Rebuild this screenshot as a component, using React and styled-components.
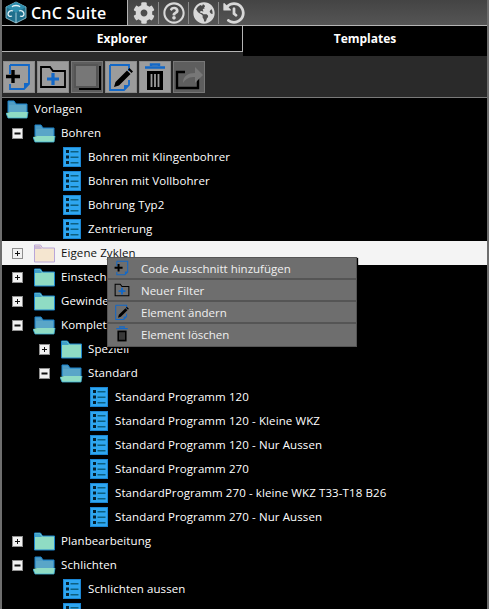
import React from 'react';
import styled, { createGlobalStyle } from 'styled-components';
import { FaCog, FaRegQuestionCircle, FaGlobeAmericas, FaHistory } from 'react-icons/fa';

const GlobalStyle = createGlobalStyle`
	html, body {
		margin: 0;
		padding: 0;
		background: #000;
		font-family: "Open Sans", "Noto Sans", "Liberation Sans", sans-serif;
	}
`;

const Frame = styled.div`
	position: relative;
	display: flex;
	flex-direction: column;
	width: 489px;
	height: 609px;
	overflow: hidden;
	box-sizing: border-box;
	border-left: 2px solid #6e6e6e;
	border-right: 2px solid #6e6e6e;
	background: #000;
	color: #fff;
`;

const TitleBar = styled.div`
	display: flex;
	flex: none;
	height: 25px;
	margin-left: -2px;
	margin-right: -2px;
	border-bottom: 1px solid #b4b4b4;
	background: linear-gradient(#444, #555);
`;

const Brand = styled.div`
	display: flex;
	align-items: center;
	gap: 3px;
	width: 128px;
	box-sizing: border-box;
	padding-left: 4px;
	border-right: 1px solid #b4b4b4;
	background: #000;
	font-size: 16px;
	font-weight: 600;
	letter-spacing: 0.2px;
`;

const TitleTools = styled.div`
	display: flex;
	align-items: center;
	padding-left: 1px;
`;

const TitleTool = styled.div`
	display: flex;
	align-items: center;
	justify-content: center;
	width: 29px;
	height: 22px;
	color: #d8d8d8;
	border-right: ${p => (p.$last ? 'none' : '1px solid #8a8a8a')};
	font-size: 22px;
`;

const Tabs = styled.div`
	display: flex;
	flex: none;
	height: 30px;
`;

const Tab = styled.div`
	display: flex;
	align-items: center;
	justify-content: center;
	box-sizing: border-box;
	width: ${p => (p.$active ? 'auto' : '241px')};
	flex: ${p => (p.$active ? '1' : 'none')};
	height: ${p => (p.$active ? '30px' : '26px')};
	padding-bottom: ${p => (p.$active ? '6px' : '0')};
	border-right: ${p => (p.$active ? 'none' : '1px solid #b4b4b4')};
	border-bottom: ${p => (p.$active ? 'none' : '1px solid #b4b4b4')};
	font-size: 12px;
	font-weight: 700;
`;

const TabGap = styled.div`
	height: 4px;
	background: #2a2a2a;
`;

const TabColumn = styled.div`
	display: flex;
	flex-direction: column;
	flex: none;
	width: 241px;
`;

const Toolbar = styled.div`
	display: flex;
	flex: none;
	align-items: center;
	gap: 2px;
	height: 40px;
	box-sizing: content-box;
	padding: 1px 0 0 1px;
	background: #2a2a2a;
	border-bottom: 1px solid #7a7a7a;
	margin-bottom: -1px;
`;

const ToolButton = styled.div`
	display: flex;
	align-items: center;
	justify-content: center;
	width: 32px;
	height: 32px;
	background: ${p => (p.$disabled ? '#5e5e5e' : '#9c9c9c')};
	border: 1px solid ${p => (p.$disabled ? '#777' : '#8a8a8a')};
	box-sizing: border-box;
`;

const Tree = styled.div`
	display: flex;
	flex-direction: column;
	flex: 1;
`;

const Row = styled.div`
	display: flex;
	flex: none;
	align-items: center;
	height: 24px;
	background: ${p => (p.$selected ? '#f4f4f4' : 'transparent')};
	color: ${p => (p.$selected ? '#111' : '#fff')};
	font-size: 11.5px;
	letter-spacing: 0.1px;
	white-space: nowrap;
`;

const RowLabel = styled.span`
	padding-bottom: 2px;
`;

const Indent = styled.div`
	display: flex;
	flex: none;
	justify-content: flex-end;
`;

const Expander = styled.div`
	display: flex;
	align-items: center;
	justify-content: center;
	width: 9px;
	height: 9px;
	margin-right: 10px;
	background: #f2f2f2;
	border: 1px solid #8f8f8f;
	color: #111;

	&::before {
		content: '';
		display: block;
		width: 5px;
		height: 1px;
		background: #111;
		box-shadow: ${p => (p.$open ? '0 0 0 0.5px #111' : 'none')};
	}

	&::after {
		content: '';
		display: ${p => (p.$open ? 'none' : 'block')};
		width: 1px;
		height: 5px;
		margin-left: -3px;
		margin-right: 2px;
		background: #111;
	}
`;

const IconSlot = styled.div`
	display: flex;
	flex: none;
	justify-content: center;
	width: 23px;
	margin-right: 5px;
`;

const Menu = styled.div`
	position: absolute;
	top: 257px;
	left: 105px;
	display: flex;
	flex-direction: column;
	width: 250px;
	box-sizing: border-box;
	border: 1px solid #555;
	background: #6e6e6e;
	color: #f0f0f0;
	font-size: 11.5px;
	box-shadow: 1px 1px 1px #000;
`;

const MenuItem = styled.div`
	display: flex;
	align-items: center;
	gap: 11px;
	height: 22px;
	box-sizing: border-box;
	padding-left: 6px;
	border-bottom: 2px solid ${p => (p.$last ? 'transparent' : '#555')};
`;

const MenuIcon = styled.div`
	display: flex;
	justify-content: center;
	width: 16px;
`;

const BLUE = '#1268c8';

const PageAddIcon = ({ size = 28 }) => (
	<svg width={size} height={size} viewBox="0 0 28 28">
		<path d="M5 2h19v19l-5 5H5v-5M5 11V2" fill="none" stroke={BLUE} strokeWidth="1.8" />
		<path d="M24 20v1l-5 5v-6z" fill={BLUE} />
		<path d="M8 7v13M1 13.5h14" stroke="#000" strokeWidth="3.4" />
	</svg>
);

const FilterAddIcon = ({ size = 28 }) => (
	<svg width={size} height={size} viewBox="0 0 28 28">
		<path d="M2 24V4h9l3 4h12v16z" fill="none" stroke="#000" strokeWidth="1.8" />
		<path d="M14 10v12M8 16h12" stroke={BLUE} strokeWidth="3.2" />
	</svg>
);

const CopyIcon = () => (
	<svg width="28" height="28" viewBox="0 0 28 28">
		<rect x="2" y="2" width="22" height="22" fill="#777" stroke="#555" strokeWidth="2" />
		<path d="M27 3v23H6" fill="none" stroke="#000" strokeWidth="2" />
	</svg>
);

const EditIcon = ({ size = 28 }) => (
	<svg width={size} height={size} viewBox="0 0 28 28">
		<path d="M3 2h19v6M22 17v5l-5 5H3V2" fill="none" stroke={BLUE} strokeWidth="1.8" />
		<path d="M22 22l-5 5v-5z" fill={BLUE} />
		<path d="M7 24l1.5-5L20 7.5l3.5 3.5L12 22.5z M21 6.5l1.5-1.5 3.5 3.5-1.5 1.5z" fill="#000" />
	</svg>
);

const TrashIcon = ({ size = 28, slat = '#9c9c9c' }) => (
	<svg width={size} height={size} viewBox="0 0 28 28">
		<path d="M10 3V1.5h8V3M4 4.5h20" fill="none" stroke={BLUE} strokeWidth="2.4" />
		<path d="M6 8h16v19H6z" fill="#000" />
		<path d="M10.5 11v13M14 11v13M17.5 11v13" stroke={slat} strokeWidth="1.8" />
	</svg>
);

const ShareIcon = () => (
	<svg width="30" height="28" viewBox="0 0 30 28">
		<path d="M24 14v11H3V9h8" fill="none" stroke="#000" strokeWidth="2.4" />
		<path d="M9 20c0-7 5-10 12-10V4l8 8-8 8v-6c-5 0-9 1-12 6z" fill="#777" />
	</svg>
);

const ClosedFolder = ({ tint = '#8fdcc4', edge = '#1c84cc' }) => (
	<svg width="21" height="19" viewBox="0 0 21 19">
		<path d="M.5 18V1h6l2 3h12v14z" fill={tint} stroke={edge} />
		<path d="M1 2h5l2 3H1z" fill={edge} opacity="0.7" />
	</svg>
);

const OpenFolder = () => (
	<svg width="23" height="19" viewBox="0 0 23 19">
		<path d="M2 12V1h6l2 3h11v8z" fill="#4f9cc4" stroke="#1c84cc" />
		<path d="M3 5h17v7H3z" fill="#5aa6c8" />
		<path d="M4 12h18l-1 6H2L0 13z" fill="#8fdcc4" />
		<path d="M0 13l2 5h19l1-6" fill="none" stroke="#3fb0d8" strokeWidth="0.8" />
	</svg>
);

const ListIcon = () => (
	<svg width="18" height="20" viewBox="0 0 18 20">
		<rect width="18" height="20" fill="#2ea6f0" />
		<rect x="0.5" y="0.5" width="17" height="19" fill="none" stroke="#1b86d4" />
		<path d="M3 3h3v3H3zM3 8.5h3v3H3zM3 14h3v3H3z" fill="#06202e" />
		<path d="M7.5 4h8v1.6h-8zM7.5 9.5h8v1.6h-8zM7.5 15h8v1.6h-8z" fill="#0d5f80" />
	</svg>
);

const CubeLogo = () => (
	<svg width="24" height="23" viewBox="0 0 24 23">
		<path d="M12 1l10 5v11l-10 5-10-5V6z" fill="#1f6f8c" stroke="#9fd0de" strokeWidth="0.8" />
		<path d="M12 1l10 5-10 5.5L2 6z" fill="#2f8fae" />
		<path d="M12 11.5V22" stroke="#cfe8f0" strokeWidth="0.8" />
		<path d="M9 10c-3-1-5 1-5 3s2 3 4 2M15 10c3-1 5 1 5 3s-2 3-4 2M8 6c1-2 7-2 8 0" fill="none" stroke="#e6f4f8" strokeWidth="1.3" />
	</svg>
);

const rows = [
	{ depth: 0, kind: 'open', label: 'Vorlagen', root: true },
	{ depth: 1, kind: 'open', label: 'Bohren', toggle: 'open' },
	{ depth: 2, kind: 'item', label: 'Bohren mit Klingenbohrer' },
	{ depth: 2, kind: 'item', label: 'Bohren mit Vollbohrer' },
	{ depth: 2, kind: 'item', label: 'Bohrung Typ2' },
	{ depth: 2, kind: 'item', label: 'Zentrierung' },
	{ depth: 1, kind: 'closed', label: 'Eigene Zyklen', toggle: 'closed', selected: true },
	{ depth: 1, kind: 'closed', label: 'Einstechen', toggle: 'closed' },
	{ depth: 1, kind: 'closed', label: 'Gewinde', toggle: 'closed' },
	{ depth: 1, kind: 'open', label: 'Komplettbearbeitung', toggle: 'open' },
	{ depth: 2, kind: 'closed', label: 'Speziell', toggle: 'closed' },
	{ depth: 2, kind: 'open', label: 'Standard', toggle: 'open' },
	{ depth: 3, kind: 'item', label: 'Standard Programm 120' },
	{ depth: 3, kind: 'item', label: 'Standard Programm 120 - Kleine WKZ' },
	{ depth: 3, kind: 'item', label: 'Standard Programm 120 - Nur Aussen' },
	{ depth: 3, kind: 'item', label: 'Standard Programm 270' },
	{ depth: 3, kind: 'item', label: 'StandardProgramm 270 - kleine WKZ T33-T18 B26' },
	{ depth: 3, kind: 'item', label: 'Standard Programm 270 - Nur Aussen' },
	{ depth: 1, kind: 'closed', label: 'Planbearbeitung', toggle: 'closed' },
	{ depth: 1, kind: 'open', label: 'Schlichten', toggle: 'open' },
	{ depth: 2, kind: 'item', label: 'Schlichten aussen' },
	{ depth: 2, kind: 'item', label: 'Schlichten innen' },
];

const TreeRow = ({ row }) => (
	<Row $selected={row.selected}>
		<Indent style={{ width: 4 + 27 * row.depth }}>
			{row.toggle && <Expander $open={row.toggle === 'open'} />}
		</Indent>
		<IconSlot>
			{row.kind === 'item' && <ListIcon />}
			{row.kind === 'open' && <OpenFolder />}
			{row.kind === 'closed' && (row.selected
				? <ClosedFolder tint="#f5e6d0" edge="#b9a6d8" />
				: <ClosedFolder />)}
		</IconSlot>
		<RowLabel>{row.label}</RowLabel>
	</Row>
);

const App = () => (
	<Frame>
		<GlobalStyle />
		<TitleBar>
			<Brand><CubeLogo />CnC Suite</Brand>
			<TitleTools>
				<TitleTool><FaCog /></TitleTool>
				<TitleTool><FaRegQuestionCircle /></TitleTool>
				<TitleTool><FaGlobeAmericas /></TitleTool>
				<TitleTool $last><FaHistory /></TitleTool>
			</TitleTools>
		</TitleBar>
		<Tabs>
			<TabColumn>
				<Tab>Explorer</Tab>
				<TabGap />
			</TabColumn>
			<Tab $active>Templates</Tab>
		</Tabs>
		<Toolbar>
			<ToolButton><PageAddIcon /></ToolButton>
			<ToolButton><FilterAddIcon /></ToolButton>
			<ToolButton $disabled><CopyIcon /></ToolButton>
			<ToolButton><EditIcon /></ToolButton>
			<ToolButton><TrashIcon /></ToolButton>
			<ToolButton $disabled><ShareIcon /></ToolButton>
		</Toolbar>
		<Tree>
			{rows.map(row => <TreeRow key={row.label} row={row} />)}
		</Tree>
		<Menu>
			<MenuItem><MenuIcon><PageAddIcon size={20} /></MenuIcon>Code Ausschnitt hinzufügen</MenuItem>
			<MenuItem><MenuIcon><FilterAddIcon size={20} /></MenuIcon>Neuer Filter</MenuItem>
			<MenuItem><MenuIcon><EditIcon size={20} /></MenuIcon>Element ändern</MenuItem>
			<MenuItem $last><MenuIcon><TrashIcon size={20} slat="#6e6e6e" /></MenuIcon>Element löschen</MenuItem>
		</Menu>
	</Frame>
);

export default App;
